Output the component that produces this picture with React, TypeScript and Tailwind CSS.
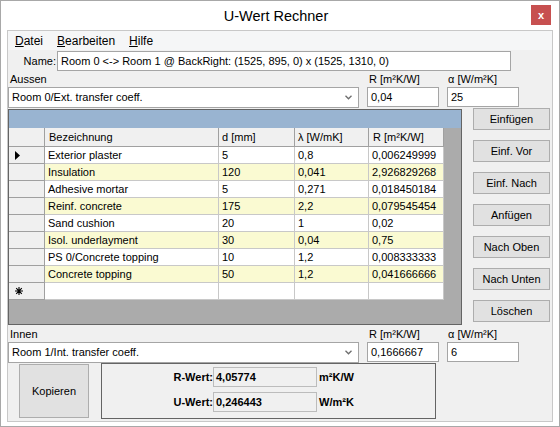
import React from 'react'

interface Layer {
  name: string
  d: string
  lambda: string
  r: string
}

const layers: Layer[] = [
  { name: 'Exterior plaster', d: '5', lambda: '0,8', r: '0,006249999' },
  { name: 'Insulation', d: '120', lambda: '0,041', r: '2,926829268' },
  { name: 'Adhesive mortar', d: '5', lambda: '0,271', r: '0,018450184' },
  { name: 'Reinf. concrete', d: '175', lambda: '2,2', r: '0,079545454' },
  { name: 'Sand cushion', d: '20', lambda: '1', r: '0,02' },
  { name: 'Isol. underlayment', d: '30', lambda: '0,04', r: '0,75' },
  { name: 'PS 0/Concrete topping', d: '10', lambda: '1,2', r: '0,008333333' },
  { name: 'Concrete topping', d: '50', lambda: '1,2', r: '0,041666666' },
]

const actions = ['Einfügen', 'Einf. Vor', 'Einf. Nach', 'Anfügen', 'Nach Oben', 'Nach Unten', 'Löschen']

function TextBox({ value, className = '' }: { value: string; className?: string }) {
  return (
    <div className={`h-[20px] bg-white border border-[#a5a5a5] flex items-center pl-[3px] leading-[14px] ${className}`}>
      {value}
    </div>
  )
}

function ComboBox({ value }: { value: string }) {
  return (
    <div className="w-[351px] h-[21px] bg-white border border-[#a5a5a5] flex items-center pl-[3px]">
      <span className="flex-1">{value}</span>
      <svg width="7" height="5" viewBox="0 0 7 5" className="mr-[6px]">
        <path d="M0.5 0.8 L3.5 3.8 L6.5 0.8" fill="none" stroke="#6d6d6d" strokeWidth="1.3" />
      </svg>
    </div>
  )
}

function WinButton({ label, className = '' }: { label: string; className?: string }) {
  return (
    <button className={`bg-[#e1e1e1] border border-[#adadad] flex items-center justify-center text-[11px] ${className}`}>
      {label}
    </button>
  )
}

function ValueFields({ label, r, alpha }: { label: string; r: string; alpha: string }) {
  return (
    <div>
      <div className="flex h-[16px] items-end pb-[1px] leading-[13px]">
        <div className="w-[359px] pl-[2px]">{label}</div>
        <div className="w-[80px] pl-[2px]">R [m²K/W]</div>
        <div className="pl-[1px]">α [W/m²K]</div>
      </div>
      <div className="flex items-start gap-[8px]">
        <ComboBox value={label === 'Aussen' ? 'Room 0/Ext. transfer coeff.' : 'Room 1/Int. transfer coeff.'} />
        <TextBox value={r} className="w-[72px]" />
        <TextBox value={alpha} className="w-[72px]" />
      </div>
    </div>
  )
}

function LayerGrid() {
  const cell = 'border-r border-b border-[#c8c8c8] pl-[3px] leading-[16px] whitespace-nowrap overflow-hidden'
  const head = 'bg-[#f0f0f0] border-r border-b border-[#a0a0a0] leading-[18px] whitespace-nowrap overflow-hidden'
  return (
    <div className="w-[454px] h-[216px] mt-[1px] border border-[#646464] flex flex-col">
      <div className="h-[18px] bg-[#99b4d1]" />
      <div className="flex-1 bg-[#ababab] flex flex-col">
        {/* Kopfzeile */}
        <div className="flex h-[19px]">
          <div className={`w-[36px] ${head}`} />
          <div className={`w-[174px] pl-[4px] ${head}`}>Bezeichnung</div>
          <div className={`w-[76px] pl-[3px] ${head}`}>d [mm]</div>
          <div className={`w-[74px] pl-[3px] ${head}`}>λ [W/mK]</div>
          <div className={`w-[75px] pl-[4px] ${head}`}>R [m²K/W]</div>
        </div>
        {layers.map((l, i) => (
          <div key={l.name} className={`flex h-[17px] ${i % 2 === 1 ? 'bg-[#fafad2]' : 'bg-white'} w-[435px]`}>
            <div className="w-[36px] bg-[#f0f0f0] border-r border-b border-[#a0a0a0] flex items-center pl-[6px]">
              {i === 0 && (
                <svg width="5" height="9" viewBox="0 0 5 9">
                  <path d="M0 0 L5 4.5 L0 9 Z" fill="#000" />
                </svg>
              )}
            </div>
            <div className={`w-[174px] ${cell}`}>{l.name}</div>
            <div className={`w-[76px] ${cell}`}>{l.d}</div>
            <div className={`w-[74px] ${cell}`}>{l.lambda}</div>
            <div className={`w-[75px] ${cell}`}>{l.r}</div>
          </div>
        ))}
        {/* neue Zeile */}
        <div className="flex h-[17px] bg-white w-[435px]">
          <div className="w-[36px] bg-[#f0f0f0] border-r border-b border-[#a0a0a0] flex items-center pl-[6px]">
            <svg width="8" height="8" viewBox="0 0 8 8">
              <path d="M4 0 V8 M0 4 H8 M1.2 1.2 L6.8 6.8 M6.8 1.2 L1.2 6.8" stroke="#000" strokeWidth="1.1" />
            </svg>
          </div>
          <div className={`w-[174px] ${cell}`} />
          <div className={`w-[76px] ${cell}`} />
          <div className={`w-[74px] ${cell}`} />
          <div className={`w-[75px] ${cell}`} />
        </div>
      </div>
    </div>
  )
}

export default function App() {
  return (
    <div className="w-[560px] h-[427px] bg-white border border-[#a8a8a8] flex flex-col font-['Liberation_Sans',Arial,sans-serif] text-[11px] text-black">
      {/* Titelleiste */}
      <div className="h-[29px] flex">
        <div className="flex-1" />
        <div className="pt-[5px] text-[14.5px] leading-[20px]">U-Wert Rechner</div>
        <div className="flex-1 flex justify-end pt-[4px] pr-[8px]">
          <div className="w-[20px] h-[20px] bg-[#c75050] text-white flex items-center justify-center text-[11px] font-bold leading-none">
            x
          </div>
        </div>
      </div>

      {/* Clientbereich */}
      <div className="mx-[6px] h-[392px] border border-[#c8c8c8] bg-[#f0f0f0] flex flex-col">
        {/* Menü */}
        <div className="h-[19px] bg-[#f5f6f7] flex items-center text-[12px] pl-[7px] gap-[14px]">
          <span><span className="underline">D</span>atei</span>
          <span><span className="underline">B</span>earbeiten</span>
          <span><span className="underline">H</span>ilfe</span>
        </div>

        {/* Name */}
        <div className="flex items-center mt-[1px]">
          <div className="w-[49px] text-right pr-[1px]">Name:</div>
          <TextBox value="Room 0 <-> Room 1 @ BackRight: (1525, 895, 0) x (1525, 1310, 0)" className="w-[454px]" />
        </div>

        <ValueFields label="Aussen" r="0,04" alpha="25" />

        {/* Schichten + Buttons */}
        <div className="flex items-start gap-[11px]">
          <LayerGrid />
          <div className="flex flex-col gap-[10px]">
            {actions.map((a) => (
              <WinButton key={a} label={a} className="w-[77px] h-[22px]" />
            ))}
          </div>
        </div>

        <div className="mt-[1px]">
          <ValueFields label="Innen" r="0,1666667" alpha="6" />
        </div>

        {/* Ergebnis */}
        <div className="flex items-start mt-[0px]">
          <WinButton label="Kopieren" className="ml-[11px] mt-[1px] w-[70px] h-[54px]" />
          <div className="ml-[12px] w-[335px] h-[56px] border border-[#646464] flex flex-col pt-[3px] gap-[5px] font-bold">
            <div className="flex items-center">
              <div className="w-[111px] text-right">R-Wert:</div>
              <div className="w-[104px] h-[20px] bg-[#f0f0f0] border border-[#bcbcbc] flex items-center pl-[2px]">4,05774</div>
              <div className="ml-[2px]">m²K/W</div>
            </div>
            <div className="flex items-center">
              <div className="w-[111px] text-right">U-Wert:</div>
              <div className="w-[104px] h-[20px] bg-[#f0f0f0] border border-[#bcbcbc] flex items-center pl-[2px]">0,246443</div>
              <div className="ml-[2px]">W/m²K</div>
            </div>
          </div>
        </div>
      </div>
    </div>
  )
}
